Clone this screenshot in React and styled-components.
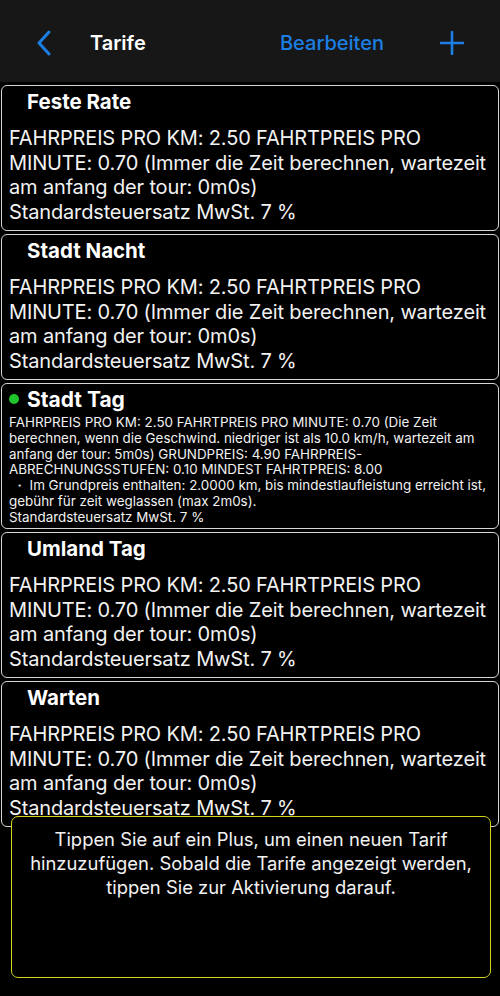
import styled, { createGlobalStyle } from "styled-components";

const Global = createGlobalStyle`
  html, body {
    margin: 0;
    padding: 0;
    background: #000;
  }
  body {
    font-family: Inter, "Liberation Sans", Arial, sans-serif;
    color: #fff;
  }
`;

const Screen = styled.div`
  position: relative;
  width: 500px;
  height: 996px;
  background: #000;
  overflow: hidden;
`;

const NavBar = styled.div`
  height: 82px;
  background: #171717;
  display: flex;
  align-items: center;
  padding: 4px 36px 0 36px;
  box-sizing: border-box;
`;

const BackButton = styled.div`
  width: 20px;
  height: 26px;
  display: flex;
  align-items: center;
  margin-right: 34px;
`;

const NavTitle = styled.div`
  font-size: 20px;
  font-weight: 600;
  flex: 1;
`;

const NavAction = styled.div`
  color: #1b7fe3;
  font-size: 20px;
  font-weight: 500;
  margin-right: 56px;
`;

const List = styled.div`
  display: flex;
  flex-direction: column;
  gap: 3px;
  padding: 3px 1px 0 1px;
`;

const Card = styled.div`
  height: 146px;
  box-sizing: border-box;
  border: 1px solid #d6d6d6;
  border-radius: 6px;
  background: #000;
  padding: 2px 1px 0 7px;
  overflow: hidden;
`;

const CardHead = styled.div`
  display: flex;
  align-items: center;
  height: 26px;
`;

const Dot = styled.span`
  width: 10px;
  height: 10px;
  border-radius: 50%;
  background: ${(p) => (p.$on ? "#1fc52a" : "transparent")};
  margin-right: 8px;
`;

const CardTitle = styled.div`
  font-size: ${(p) => (p.$active ? "21px" : "20.5px")};
  font-weight: 700;
`;

const CardBody = styled.div`
  margin-top: ${(p) => (p.$small ? "3px" : "12px")};
  font-size: ${(p) => (p.$small ? "13.4px" : "20px")};
  line-height: ${(p) => (p.$small ? "15.8px" : "24.5px")};
  letter-spacing: ${(p) => (p.$small ? "0" : "-0.15px")};
  color: #f2f2f2;
`;

const Hint = styled.div`
  position: absolute;
  left: 11px;
  top: 816px;
  width: 480px;
  height: 162px;
  box-sizing: border-box;
  border: 1px solid #d4d41c;
  border-radius: 7px;
  background: #000;
  padding: 10px 16px 0;
  text-align: center;
  font-size: 18.4px;
  line-height: 24px;
  color: #f2f2f2;
`;

const standard =
  "FAHRPREIS PRO KM: 2.50 FAHRTPREIS PRO MINUTE: 0.70 (Immer die Zeit berechnen, wartezeit am anfang der tour: 0m0s)";

const tariffs = [
  { name: "Feste Rate", lines: [standard, "Standardsteuersatz MwSt. 7 %"] },
  { name: "Stadt Nacht", lines: [standard, "Standardsteuersatz MwSt. 7 %"] },
  {
    name: "Stadt Tag",
    active: true,
    lines: [
      "FAHRPREIS PRO KM: 2.50 FAHRTPREIS PRO MINUTE: 0.70 (Die Zeit berechnen, wenn die Geschwind. niedriger ist als 10.0 km/h, wartezeit am anfang der tour: 5m0s) GRUNDPREIS: 4.90 FAHRPREIS-ABRECHNUNGSSTUFEN: 0.10 MINDEST FAHRTPREIS: 8.00",
      "\u00a0・ Im Grundpreis enthalten: 2.0000 km, bis mindestlaufleistung erreicht ist, gebühr für zeit weglassen (max 2m0s).",
      "Standardsteuersatz MwSt. 7 %",
    ],
  },
  { name: "Umland Tag", lines: [standard, "Standardsteuersatz MwSt. 7 %"] },
  { name: "Warten", lines: [standard, "Standardsteuersatz MwSt. 7 %"] },
];

const Chevron = () => (
  <svg width="16" height="26" viewBox="0 0 16 26" fill="none">
    <path d="M13 2 L3 13 L13 24" stroke="#1b7fe3" strokeWidth="3" strokeLinecap="round" strokeLinejoin="round" />
  </svg>
);

const Plus = () => (
  <svg width="24" height="24" viewBox="0 0 24 24" fill="none">
    <path d="M12 1 V23 M1 12 H23" stroke="#1b7fe3" strokeWidth="2.6" strokeLinecap="round" />
  </svg>
);

export default function App() {
  return (
    <Screen>
      <Global />
      <NavBar>
        <BackButton>
          <Chevron />
        </BackButton>
        <NavTitle>Tarife</NavTitle>
        <NavAction>Bearbeiten</NavAction>
        <Plus />
      </NavBar>
      <List>
        {tariffs.map((t) => (
          <Card key={t.name}>
            <CardHead>
              <Dot $on={t.active} />
              <CardTitle $active={t.active}>{t.name}</CardTitle>
            </CardHead>
            <CardBody $small={t.active}>
              {t.lines.map((l, i) => (
                <div key={i}>{l}</div>
              ))}
            </CardBody>
          </Card>
        ))}
      </List>
      <Hint>
        Tippen Sie auf ein Plus, um einen neuen Tarif hinzuzufügen. Sobald die Tarife angezeigt werden, tippen Sie zur
        Aktivierung darauf.
      </Hint>
    </Screen>
  );
}
